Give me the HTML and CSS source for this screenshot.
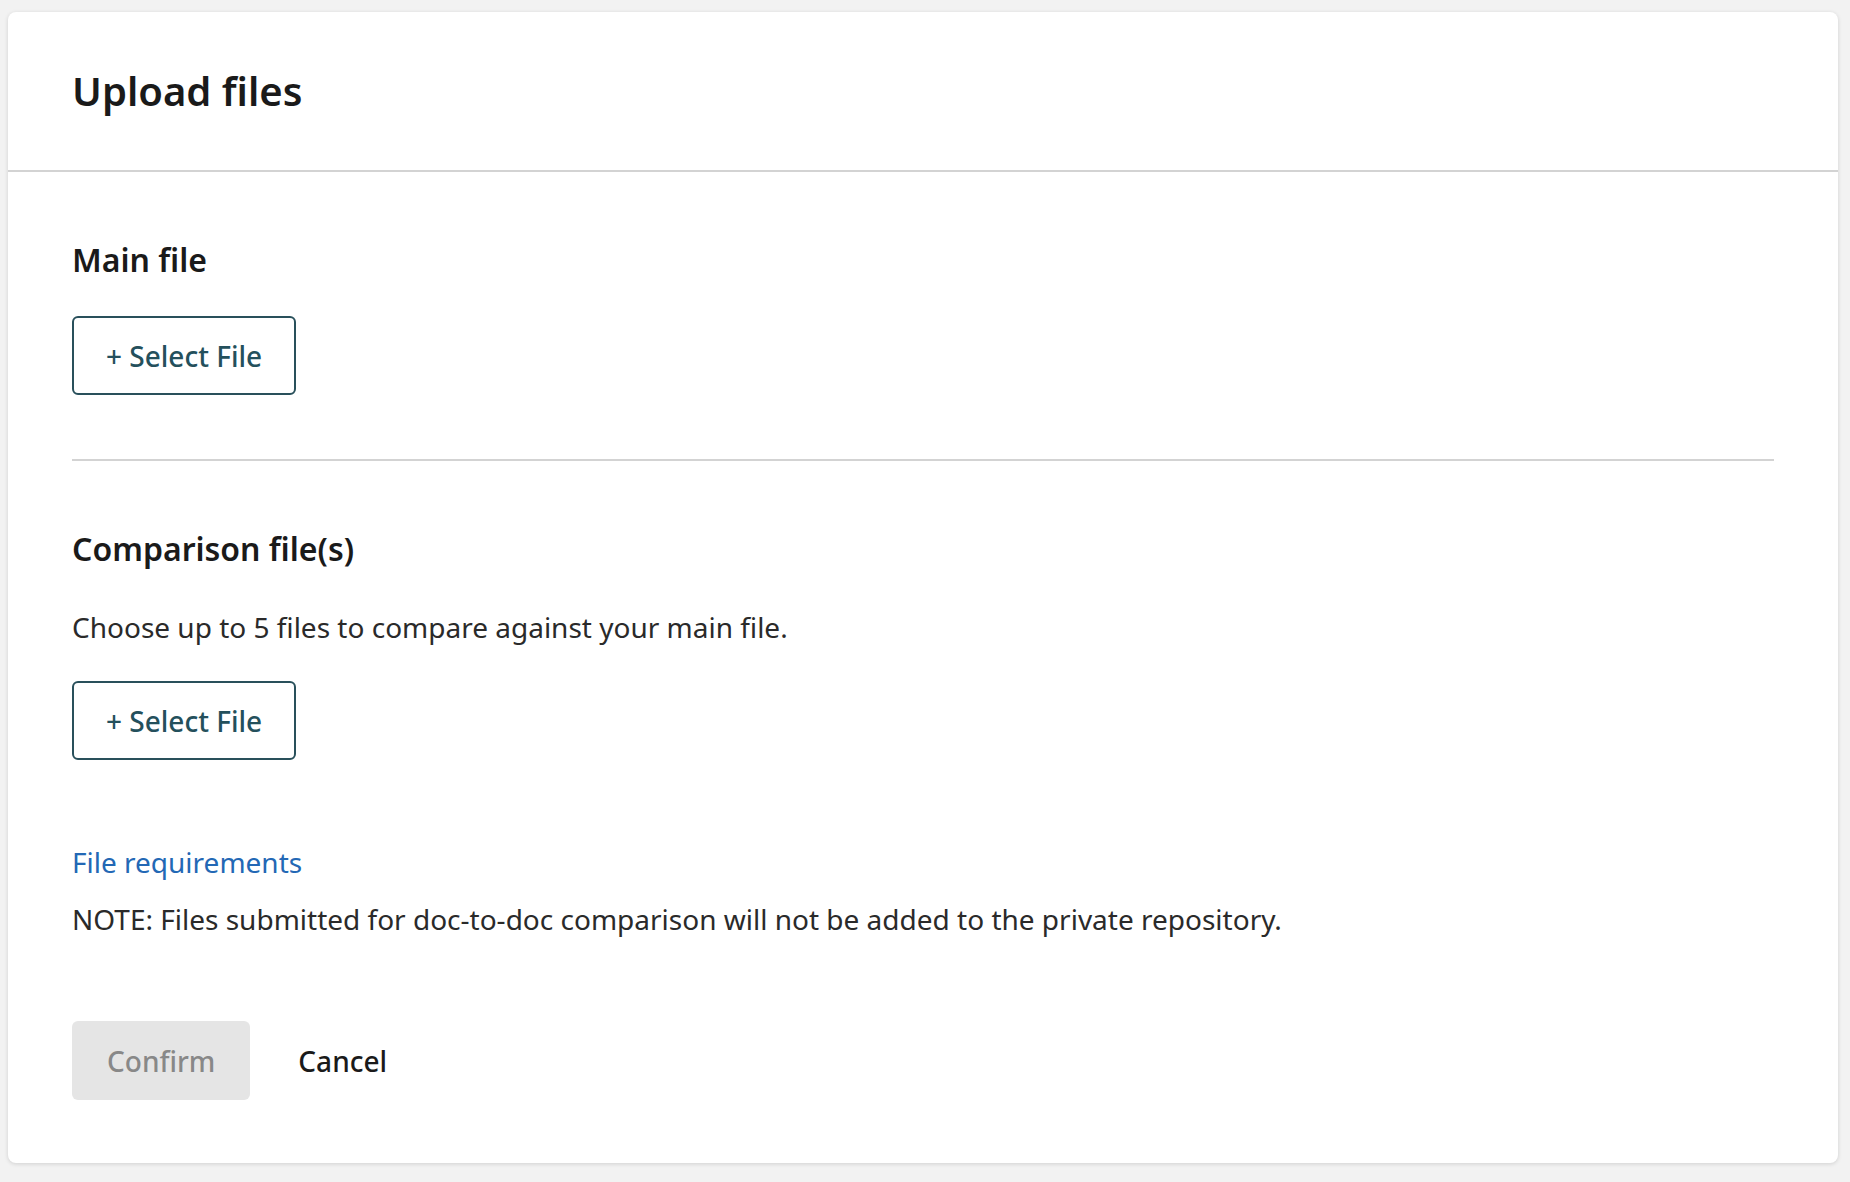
FILE: index.html
```html
<!DOCTYPE html>
<html lang="en">
<head>
<meta charset="utf-8">
<title>Upload files</title>
<link rel="stylesheet" href="styles.css">
</head>
<body>
<div class="page">
  <div class="card">
    <div class="card-header">
      <h1 class="title">Upload files</h1>
    </div>
    <div class="card-body">
      <section class="section section-main">
        <h2 class="section-title">Main file</h2>
        <button class="btn-outline" type="button">+ Select File</button>
      </section>
      <section class="section section-compare">
        <h2 class="section-title">Comparison file(s)</h2>
        <p class="help">Choose up to 5 files to compare against your main file.</p>
        <button class="btn-outline" type="button">+ Select File</button>
        <a class="link" href="#">File requirements</a>
        <p class="note">NOTE: Files submitted for doc-to-doc comparison will not be added to the private repository.</p>
        <div class="actions">
          <button class="btn-confirm" type="button" disabled>Confirm</button>
          <button class="btn-cancel" type="button">Cancel</button>
        </div>
      </section>
    </div>
  </div>
</div>
</body>
</html>
```

FILE: styles.css
```css
* { box-sizing: border-box; }

html, body {
  margin: 0;
  padding: 0;
  background: #f2f2f2;
  font-family: "Noto Sans", "Open Sans", sans-serif;
  color: #1c1c1c;
}

.page {
  padding: 12px 12px 19px 8px;
}

.card {
  width: 1830px;
  height: 1151px;
  background: #ffffff;
  border-radius: 8px;
  box-shadow: 0 1px 4px rgba(0, 0, 0, 0.14);
}

.card-header {
  height: 160px;
  padding: 0 64px;
  display: flex;
  align-items: center;
  border-bottom: 2px solid #d3d3d3;
}

.title {
  margin: 0;
  font-size: 40px;
  line-height: 56px;
  font-weight: 600;
  color: #1a1a1a;
}

.card-body {
  padding: 0 64px;
}

.section-main {
  padding: 64px 0 64px;
  border-bottom: 2px solid #d3d3d3;
}

.section-compare {
  padding-top: 64px;
}

.section-title {
  margin: 0 0 32px;
  font-size: 32px;
  line-height: 48px;
  font-weight: 600;
  color: #1a1a1a;
}

.help {
  margin: 34px 0 34px;
  font-size: 28px;
  line-height: 40px;
  color: #2a2a2a;
}

.btn-outline {
  display: block;
  height: 79px;
  padding: 0 32px;
  background: #ffffff;
  border: 2px solid #29505b;
  border-radius: 6px;
  font-family: "Noto Sans", "Open Sans", sans-serif;
  font-size: 28px;
  font-weight: 500;
  color: #24505c;
  cursor: pointer;
}

.link {
  display: block;
  margin-top: 82px;
  font-size: 28px;
  line-height: 40px;
  color: #2368b5;
  text-decoration: none;
}

.note {
  margin: 17px 0 0;
  font-size: 28px;
  line-height: 40px;
  color: #2a2a2a;
}

.actions {
  margin-top: 82px;
  display: flex;
  align-items: center;
  gap: 32px;
}

.btn-confirm {
  height: 79px;
  padding: 0 35px;
  border: none;
  border-radius: 6px;
  background: #e5e5e5;
  font-family: "Noto Sans", "Open Sans", sans-serif;
  font-size: 28px;
  font-weight: 500;
  color: #888888;
}

.btn-cancel {
  height: 79px;
  padding: 0 16px;
  border: none;
  background: transparent;
  font-family: "Noto Sans", "Open Sans", sans-serif;
  font-size: 28px;
  font-weight: 500;
  color: #1a1a1a;
  cursor: pointer;
}
```
